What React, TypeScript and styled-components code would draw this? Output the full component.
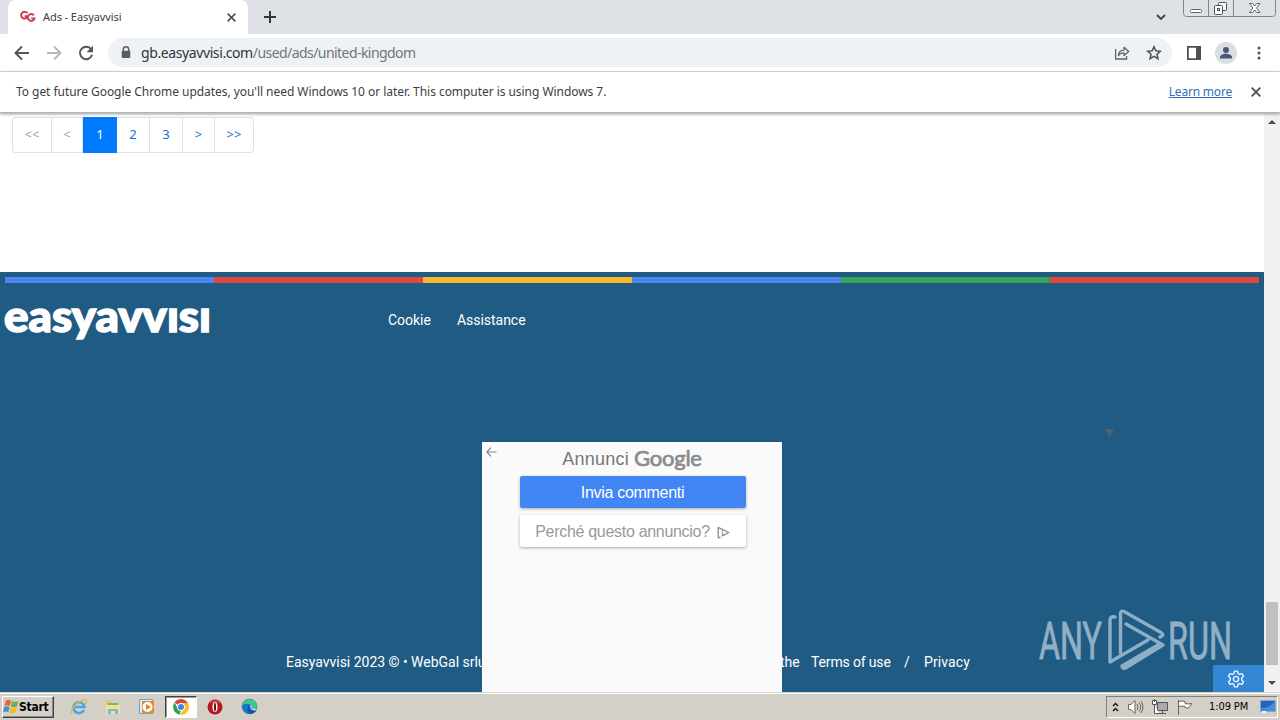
import React from 'react'
import styled, { createGlobalStyle, css } from 'styled-components'

const stripeColors = ['#4a86ee', '#e0483e', '#f8b92c', '#4a86ee', '#36a457', '#e0483e']

const pages = [
  { label: '<<', width: 39, disabled: true },
  { label: '<', width: 31, disabled: true },
  { label: '1', width: 34, active: true },
  { label: '2', width: 33 },
  { label: '3', width: 33 },
  { label: '>', width: 32 },
  { label: '>>', width: 39 },
]

const App: React.FC = () => (
  <Screen>
    <GlobalStyle />
    <TabStrip>
      <Tab>
        <Favicon />
        <TabTitle>Ads - Easyavvisi</TabTitle>
        <CloseIcon size={9} />
      </Tab>
      <NewTab>
        <svg width="12" height="12" viewBox="0 0 12 12" stroke="#33363b" strokeWidth="2">
          <path d="M6 0v12M0 6h12" />
        </svg>
      </NewTab>
      <WindowTools>
        <TabSearch width="10" height="7" viewBox="0 0 10 7">
          <path d="M1 1l4 4 4-4" fill="none" stroke="#3c4043" strokeWidth="1.8" />
        </TabSearch>
        <WindowButtons />
      </WindowTools>
    </TabStrip>

    <Toolbar>
      <NavButtons>
        <Arrow color="#53565b" />
        <Arrow color="#b5b7ba" flipped />
        <Reload />
      </NavButtons>
      <AddressBar>
        <Lock />
        <Url>
          <b>gb.easyavvisi.com</b>/used/ads/united-kingdom
        </Url>
        <Share />
        <Star />
      </AddressBar>
      <ToolbarActions />
    </Toolbar>

    <InfoBar>
      <InfoText>
        To get future Google Chrome updates, you'll need Windows 10 or later. This computer is using Windows 7.
      </InfoText>
      <LearnMore>Learn more</LearnMore>
      <CloseIcon size={10} />
    </InfoBar>

    <Viewport>
      <Page>
        <Pagination>
          {pages.map((page) => (
            <PageItem key={page.label} $width={page.width} $active={page.active} $disabled={page.disabled}>
              {page.label}
            </PageItem>
          ))}
        </Pagination>
        <Footer>
          <Stripes>
            {stripeColors.map((color, i) => (
              <Stripe key={i} $color={color} />
            ))}
          </Stripes>
          <FooterTop>
            <SiteLogo />
            <FooterLink>Cookie</FooterLink>
            <FooterLink>Assistance</FooterLink>
          </FooterTop>
          <Legal>
            <Owner>Easyavvisi 2023 © • WebGal srlu</Owner>
            <The>the</The>
            <Terms>Terms of use</Terms>
            <Slash>/</Slash>
            <Privacy>Privacy</Privacy>
          </Legal>
        </Footer>
        <AdPanel />
        <Collapse>▼</Collapse>
        <Watermark />
        <SettingsTab>
          <Gear />
        </SettingsTab>
      </Page>
      <Scrollbar>
        <ScrollArrow $up />
        <ScrollThumb />
        <ScrollArrow />
      </Scrollbar>
    </Viewport>

    <Taskbar>
      <StartButton>
        <WindowsFlag />
        Start
      </StartButton>
      <QuickLaunch />
      <Tray />
    </Taskbar>
  </Screen>
)

const Favicon = () => (
  <svg width="16" height="12" viewBox="0 0 16 12" fill="none" stroke="#c93b50" strokeWidth="1.900">
    <path d="M7.400 2.300A3.400 3.400 0 1 0 7.800 5.200H4.600" />
    <path d="M13.900 4.300A3.400 3.400 0 1 0 14.500 7.400h-3.200" />
  </svg>
)

const CloseIcon = ({ size }: { size: number }) => (
  <svg width={size} height={size} viewBox="0 0 10 10" stroke="#4b4e52" strokeWidth="1.8">
    <path d="M.7.7l8.6 8.6M9.3.7L.7 9.3" />
  </svg>
)

const Arrow = ({ color, flipped }: { color: string; flipped?: boolean }) => (
  <svg width="16" height="16" viewBox="0 0 16 16" fill="none" stroke={color} strokeWidth="1.9">
    <path d={flipped ? 'M1 8h13M8 1.5L14.5 8 8 14.5' : 'M15 8H2M8 1.5L1.500 8 8 14.500'} />
  </svg>
)

const Reload = () => (
  <svg width="16" height="16" viewBox="0 0 16 16">
    <path d="M13.2 4.300A6.200 6.200 0 1 0 14.100 9.800" fill="none" stroke="#53565b" strokeWidth="2" />
    <path d="M15 .8v6.400H8.600z" fill="#53565b" />
  </svg>
)

const Lock = () => (
  <svg width="10" height="13" viewBox="0 0 10 13">
    <path d="M2.300 5V3.500a2.700 2.700 0 0 1 5.400 0V5" fill="none" stroke="#595c61" strokeWidth="1.500" />
    <rect x=".7" y="4.700" width="8.600" height="7.300" rx="1" fill="#595c61" />
  </svg>
)

const Share = () => (
  <ShareSvg width="16" height="16" viewBox="0 0 16 16" fill="none" stroke="#5f6368" strokeWidth="1.300">
    <path d="M1.600 4v10h11v-3" />
    <path d="M4.300 10.600c.4-3.500 2.500-5.400 5.700-5.500V2.300l4.700 4.200L10 10.600V7.900c-2.500 0-4.200.7-5.700 2.700z" strokeLinejoin="round" />
  </ShareSvg>
)

const Star = () => (
  <svg width="16" height="16" viewBox="0 0 16 16">
    <path
      d="M8 1.700l1.850 4.100 4.450.45-3.350 3 1 4.450L8 11.400l-3.950 2.300 1-4.450-3.350-3 4.450-.45z"
      fill="none"
      stroke="#4d5156"
      strokeWidth="1.500"
    />
  </svg>
)

const ToolbarActions = () => (
  <Actions>
    <svg width="14" height="14" viewBox="0 0 14 14">
      <path d="M.9.9h12.200v12.200H.9z" fill="none" stroke="#4d5055" strokeWidth="1.800" />
      <path d="M9 1h4.500v12H9z" fill="#4d5055" />
    </svg>
    <svg width="22" height="22" viewBox="0 0 22 22">
      <circle cx="11" cy="11" r="11" fill="#dadde2" />
      <circle cx="11" cy="8" r="3" fill="#4a5875" />
      <path d="M5 16.500v-1.400c0-2 3-3.300 6-3.300s6 1.300 6 3.300v1.400z" fill="#4a5875" />
    </svg>
    <svg width="4" height="14" viewBox="0 0 4 14" fill="#505358">
      <circle cx="2" cy="2" r="1.500" />
      <circle cx="2" cy="7" r="1.500" />
      <circle cx="2" cy="12" r="1.500" />
    </svg>
  </Actions>
)

const WindowButtons = () => (
  <svg width="94" height="17" viewBox="0 0 94 17" fill="none" stroke="#7f848b">
    <path d="M.5 0v13.500a3 3 0 0 0 3 3h86a3 3 0 0 0 3-3V0M25.500 0v16M50.500 0v16" />
    <rect x="7.500" y="9.500" width="11" height="3" rx="1" fill="#fff" stroke="#60646b" />
    <rect x="35.500" y="2.500" width="8" height="8" rx="1" fill="#f4f5f7" stroke="#4f535a" />
    <rect x="31.500" y="5.500" width="8" height="9" rx="1" fill="#fff" stroke="#4f535a" />
    <rect x="34.500" y="8.500" width="2" height="2" stroke="#4f535a" />
    <path
      d="M66.500 3.500h3.200l2 2.500 2-2.500h3.200l-3.400 4.500 3.400 4.500h-3.200l-2-2.500-2 2.500h-3.200l3.400-4.500z"
      fill="#fff"
      stroke="#60646b"
    />
  </svg>
)

const SiteLogo = () => (
  <LogoSvg width="212" height="54" viewBox="0 0 212 54">
    <text
      x="1"
      y="38.500"
      textLength="207"
      lengthAdjust="spacingAndGlyphs"
      fontFamily="Lato, sans-serif"
      fontWeight="900"
      fontSize="43"
      fill="#fff"
      stroke="#fff"
      strokeWidth="1.500"
    >
      easyavvısı
    </text>
  </LogoSvg>
)

const AdPanel = () => (
  <Ad>
    <BackArrow width="11" height="10" viewBox="0 0 11 10" fill="none" stroke="#858585" strokeWidth="1.200">
      <path d="M10.500 5H1M5 .7L.8 5 5 9.300" />
    </BackArrow>
    <AdTitle>
      <span>Annunci</span>
      <GoogleWord>Google</GoogleWord>
    </AdTitle>
    <AdButton $primary>Invia commenti</AdButton>
    <AdButton>
      Perché questo annuncio?
      <svg width="13" height="13" viewBox="0 0 13 13" fill="none" stroke="#8a8a8a" strokeWidth="1.300">
        <path d="M3.600 11.500H1.200V1.300L11.800 6.500 5.500 9.800V6.500M5.500 4.500v1" strokeLinejoin="round" />
      </svg>
    </AdButton>
  </Ad>
)

const Watermark = () => (
  <WatermarkSvg width="210" height="72" viewBox="0 0 210 72">
    <g fill="#c7d9e7" stroke="#c7d9e7" strokeWidth=".8" fontFamily="Roboto, sans-serif" fontSize="51">
      <text x="7" y="54" textLength="63" lengthAdjust="spacingAndGlyphs">
        ANY
      </text>
      <text x="136" y="54" textLength="64" lengthAdjust="spacingAndGlyphs">
        RUN
      </text>
    </g>
    <g fill="none" stroke="#bfd7e8" strokeWidth="3.400" strokeLinejoin="round" strokeLinecap="round">
      <path d="M88.500 48V9q0-4 3.500-2.500l37 21q4 3-1 4.500" />
      <path d="M94 19l37 21-37.500 23q-3.500 1-3.500-2l36-21" />
      <path d="M83 12q-5-1-5 3v42l38-22" />
    </g>
  </WatermarkSvg>
)

const Gear = () => (
  <svg width="18" height="18" viewBox="0 0 24 24" fill="none" stroke="#e4f3ff" strokeWidth="1.900" strokeLinejoin="round">
    <circle cx="12" cy="12" r="3.500" />
    <path d="M10 1.500h4l.8 3.200 2 1.200 3.200-1 2 3.500-2.400 2.300v2.600l2.400 2.300-2 3.500-3.200-1-2 1.200-.8 3.200h-4l-.8-3.200-2-1.200-3.200 1-2-3.500 2.400-2.300v-2.600L2 8.400l2-3.500 3.200 1 2-1.200z" />
  </svg>
)

const WindowsFlag = () => (
  <svg width="16" height="16" viewBox="1 0 16 16">
    <path d="M4 1.500q2.500-1.600 5 0L7.800 7q-2.400-1.500-5.200 0z" fill="#e8652d" />
    <path d="M10 2q2.800 1.500 6.500 0L15 7.600q-2.800 1.200-6.200-.1z" fill="#71b644" />
    <path d="M2.300 8q2.500-1.600 5.200 0l-1.300 5.300q-2.300-1.600-5.200 0z" fill="#3e91d5" />
    <path d="M8.500 8.500q2.700 1.500 6.200 0l-1.400 5.300q-2.700 1.500-6.100-.1z" fill="#f4ba28" />
  </svg>
)

const QuickLaunch = () => (
  <Launchers>
    <Launcher>
      <svg width="18" height="18" viewBox="0 0 18 18" fill="none">
        <path d="M14 12A5.500 5.500 0 1 1 14.500 9H5" stroke="#45a9e5" strokeWidth="2.600" />
        <path d="M2.500 16C-1 14 5 4 14 2c3-.4 3 1.500 1.500 4" stroke="#e4b735" strokeWidth="1.300" />
      </svg>
    </Launcher>
    <Launcher>
      <svg width="18" height="18" viewBox="0 0 18 18">
        <path d="M2 3h5l1 2h7v11H2z" fill="#e9c85c" />
        <path d="M4 5h10v5H4z" fill="#70bc73" />
        <path d="M2 7h14v9H2z" fill="#f6df91" />
        <path d="M4 16v-5h10v5h-3v-3H7v3z" fill="#7db9dd" />
      </svg>
    </Launcher>
    <Launcher>
      <svg width="18" height="18" viewBox="0 0 18 18">
        <path d="M1.500 1.500h13v14h-13z" fill="#d9ecf8" stroke="#6ba7ce" />
        <path d="M4 3h12v12H4z" fill="#ef8a23" />
        <circle cx="9.500" cy="9" r="5" fill="#fff" />
        <path d="M8 6l5 3-5 3z" fill="#e97b16" />
      </svg>
    </Launcher>
    <Launcher $pressed>
      <svg width="16" height="16" viewBox="0 0 16 16">
        <path d="M8 8L1.500 3.500A8 8 0 0 1 15.200 4.500H8z" fill="#df4335" />
        <path d="M1.500 3.500L5 10l3 1.500-1.500 4.300A8 8 0 0 1 1.500 3.500" fill="#2e9f51" />
        <path d="M8 4.500h7.200A8 8 0 0 1 6.800 15.900L11 10z" fill="#fac21c" />
        <circle cx="8" cy="8" r="3.900" fill="#fff" />
        <circle cx="8" cy="8" r="3" fill="#4285e8" />
      </svg>
    </Launcher>
    <Launcher>
      <svg width="16" height="16" viewBox="0 0 16 16">
        <circle cx="8" cy="8" r="7.500" fill="#b81622" />
        <path d="M3 4q5-4 10 0" stroke="#e65c61" fill="none" />
        <ellipse cx="8" cy="8" rx="2.500" ry="5" fill="#fff" />
        <ellipse cx="8" cy="8" rx="1" ry="4.500" fill="#6a1016" />
      </svg>
    </Launcher>
    <Launcher>
      <svg width="17" height="17" viewBox="0 0 17 17">
        <circle cx="8.500" cy="8.500" r="7.800" fill="#1777c9" />
        <path d="M.8 8C1 .5 14-2 16.300 7q.3 4-6 3.700 1-3-1.800-4.500Q4 4.500.8 8" fill="#42c391" />
        <path d="M9 6q-3 5 3 6.500 2 .5 4-1-2 4-6 4.300Q3 13 9 6" fill="#0f55a5" />
        <path d="M9.500 7q2 1 1 3.300l5.500.4-1.500 1.800q-6 0-5-5.500" fill="#d9d7d0" />
      </svg>
    </Launcher>
  </Launchers>
)

const Tray = () => (
  <TrayBox>
    <svg width="7" height="10" viewBox="0 0 7 10" fill="none" stroke="#111" strokeWidth="1.400">
      <path d="M1 4l2.500-2.500L6 4M1 9l2.500-2.500L6 9" />
    </svg>
    <svg width="17" height="16" viewBox="0 0 17 16" fill="#fff" stroke="#686868">
      <path d="M1.500 5.500H4l4-4v13l-4-4H1.500z" />
      <path d="M10 5q2 3 0 6M12 3.500q3.500 4.500 0 9M14 2q4 6 0 12" fill="none" />
    </svg>
    <svg width="17" height="16" viewBox="0 0 17 16" fill="#fff" stroke="#555">
      <path d="M5.500 3.500h10v8h-10z" fill="#aaa" />
      <path d="M7 14.500h7M10.500 12v3" />
      <path d="M.5 1.500h4v4h-4zM2.500 0v3M2.500 6v8.500H7" />
    </svg>
    <svg width="17" height="16" viewBox="0 0 17 16" fill="#fff" stroke="#666">
      <path d="M1.500 1v15M2 2.500q3-1 6 0v2q3 1 7 0l-3 4q-2 1-4 0v-1q-3-1-6 0" />
    </svg>
    <Clock>1:09 PM</Clock>
    <svg width="16" height="14" viewBox="0 0 16 14">
      <path d="M.5.5h15v11H.5z" fill="#2462bb" stroke="#86a9cb" />
      <path d="M1 8Q10 8 15 1v10H1z" fill="#438ddd" />
      <path d="M2 12h4" stroke="#edf7ff" strokeWidth="2" />
    </svg>
  </TrayBox>
)

const GlobalStyle = createGlobalStyle`
  * {
    box-sizing: border-box;
  }

  body {
    margin: 0;
    overflow: hidden;
  }

  svg {
    display: block;
    flex: none;
  }
`

const uiFont = css`
  font-family: 'DejaVu Sans Condensed', 'DejaVu Sans', sans-serif;
  font-stretch: condensed;
`

const Screen = styled.div`
  width: 1280px;
  height: 720px;
  display: flex;
  flex-direction: column;
  overflow: hidden;
  background: #fff;
  white-space: nowrap;
`

const TabStrip = styled.header`
  height: 34px;
  display: flex;
  padding-left: 8px;
  background: #dee1e6;
`

const Tab = styled.div`
  width: 240px;
  display: flex;
  align-items: center;
  padding: 0 12px;
  border-radius: 8px 8px 0 0;
  background: #fff;
`

const TabTitle = styled.span`
  flex: 1;
  margin: -2px 0 0 7px;
  font: 11px 'Noto Sans', sans-serif;
  letter-spacing: -0.08px;
  color: #3c4043;
`

const NewTab = styled.div`
  display: flex;
  align-items: center;
  padding-left: 16px;
`

const WindowTools = styled.div`
  display: flex;
  margin-left: auto;
  padding-right: 3px;
  gap: 17px;
`

const TabSearch = styled.svg`
  margin-top: 14px;
`

const Toolbar = styled.div`
  height: 38px;
  display: flex;
  align-items: center;
  padding: 0 19px 0 14px;
  border-bottom: 1px solid #d5d7da;
`

const NavButtons = styled.div`
  display: flex;
  gap: 16px;
`

const AddressBar = styled.div`
  flex: 1;
  height: 29px;
  display: flex;
  align-items: center;
  margin-left: 14px;
  padding: 0 10px 0 13px;
  border-radius: 15px;
  background: #eff2f5;
`

const Url = styled.span`
  flex: 1;
  margin-left: 10px;
  font: 14px 'Noto Sans', sans-serif;
  letter-spacing: -0.56px;
  color: #70757b;

  b {
    font-weight: 400;
    letter-spacing: -0.4px;
    color: #303439;
  }
`

const ShareSvg = styled.svg`
  margin-right: 16px;
`

const Actions = styled.div`
  display: flex;
  align-items: center;
  gap: 14px;
  margin-left: 15px;

  svg:last-child {
    margin-left: 6px;
  }
`

const InfoBar = styled.div`
  position: relative;
  z-index: 1;
  height: 41px;
  display: flex;
  align-items: center;
  padding: 0 19px 0 16px;
  background: #fff;
  border-bottom: 1px solid #b5b5b5;
  box-shadow: 0 1px 3px #999;
`

const InfoText = styled.span`
  flex: 1;
  margin-top: -2px;
  font: 12px 'Noto Sans', sans-serif;
  letter-spacing: -0.05px;
  color: #3c4043;
`

const LearnMore = styled.a`
  margin: -2px 19px 0 0;
  font: 12px 'Noto Sans', sans-serif;
  letter-spacing: -0.2px;
  color: #3270bd;
  text-decoration: underline;
`

const Viewport = styled.div`
  flex: 1;
  min-height: 0;
  display: flex;
`

const Page = styled.main`
  position: relative;
  flex: 1;
  display: flex;
  flex-direction: column;
  padding-top: 4px;
`

const Pagination = styled.nav`
  width: 242px;
  height: 36px;
  display: flex;
  margin-left: 12px;
  border: solid #dee2e6;
  border-width: 1px 0 1px 1px;
  border-radius: 4px;
`

const PageItem = styled.a<{ $width: number; $active?: boolean; $disabled?: boolean }>`
  width: ${(props) => props.$width}px;
  flex: none;
  display: flex;
  align-items: center;
  justify-content: center;
  padding-bottom: 2px;
  border-right: 1px solid #dee2e6;
  font: 13px 'Noto Sans', sans-serif;
  color: ${(props) => (props.$disabled ? '#9b9fa3' : '#1970cf')};

  &:last-child {
    border-radius: 0 4px 4px 0;
  }

  ${(props) =>
    props.$active &&
    css`
      margin: -1px 0;
      border: 0;
      background: #007bff;
      color: #fff;
    `}
`

const Footer = styled.footer`
  flex: 1;
  display: flex;
  flex-direction: column;
  margin-top: 119px;
  padding: 5px 5px 0;
  background: #205b83;
  font: 14px Roboto, sans-serif;
  color: #fff;
`

const Stripes = styled.div`
  height: 6px;
  display: flex;
`

const Stripe = styled.span<{ $color: string }>`
  flex: 1;
  background: ${(props) => props.$color};
`

const FooterTop = styled.div`
  display: flex;
  align-items: center;
  padding-top: 10px;
  gap: 26px;
`

const LogoSvg = styled.svg`
  margin-left: -2px;
  margin-right: 147px;
`

const FooterLink = styled.a`
  letter-spacing: -0.02px;
`

const Legal = styled.div`
  display: flex;
  margin-top: auto;
  padding: 0 0 22px 281px;
`

const Owner = styled.span`
  width: 494px;
  letter-spacing: -0.02px;
`

const The = styled.span`
  width: 31px;
`

const Terms = styled.span`
  width: 93px;
  letter-spacing: -0.15px;
`

const Slash = styled.span`
  width: 20px;
`

const Privacy = styled.span`
  letter-spacing: 0.1px;
`

const Ad = styled.aside`
  position: absolute;
  left: 482px;
  bottom: 0;
  width: 300px;
  height: 250px;
  display: flex;
  flex-direction: column;
  align-items: center;
  background: #fafafa;
`

const BackArrow = styled.svg`
  position: absolute;
  top: 5px;
  left: 4px;
`

const AdTitle = styled.div`
  height: 34px;
  display: flex;
  align-items: center;
  gap: 5px;
  font: 18px 'Liberation Sans', sans-serif;
  letter-spacing: 0.25px;
  color: #777;
`

const GoogleWord = styled.b`
  margin-top: -4px;
  font: 400 22px Lato, sans-serif;
  letter-spacing: -0.25px;
  color: #8b8b8b;
  -webkit-text-stroke: 0.7px #8b8b8b;
`

const AdButton = styled.button<{ $primary?: boolean }>`
  width: 226px;
  height: 32px;
  display: flex;
  align-items: center;
  justify-content: center;
  gap: 7px;
  margin: 0 0 7px 1px;
  padding: 2px 0 0;
  border: 0;
  border-radius: 2px;
  background: ${(props) => (props.$primary ? '#4285f4' : '#fff')};
  box-shadow: 0 1px 3px #aaa;
  font: 16px 'Liberation Sans', sans-serif;
  letter-spacing: -0.3px;
  color: ${(props) => (props.$primary ? '#fff' : '#999')};
`

const Collapse = styled.span`
  position: absolute;
  top: 313px;
  left: 1105px;
  font: 11px 'DejaVu Sans', sans-serif;
  color: #50616d;
`

const WatermarkSvg = styled.svg`
  position: absolute;
  right: 22px;
  bottom: 15px;
  opacity: 0.68;
`

const SettingsTab = styled.div`
  position: absolute;
  right: 0;
  bottom: 0;
  width: 51px;
  height: 27px;
  display: flex;
  align-items: center;
  padding-left: 14px;
  border-top-left-radius: 2px;
  background: #3487d5;
`

const Scrollbar = styled.div`
  width: 16px;
  display: flex;
  flex-direction: column;
  align-items: center;
  padding: 7px 0;
  background: #f1f1f1;
`

const ScrollArrow = styled.i<{ $up?: boolean }>`
  border: 4px solid transparent;
  border-top-width: ${(props) => (props.$up ? 0 : 4)}px;
  border-bottom-width: ${(props) => (props.$up ? 4 : 0)}px;
  border-${(props) => (props.$up ? 'bottom' : 'top')}-color: #4b4b4b;
`

const ScrollThumb = styled.div`
  width: 12px;
  height: 63px;
  margin: auto 0 16px;
  background: #c1c1c1;
`

const Taskbar = styled.footer`
  height: 28px;
  display: flex;
  align-items: center;
  padding: 0 2px;
  border-top: 1px solid #d4d0c8;
  box-shadow: inset 0 1px #fff;
  background: #d4d0c8;
`

const StartButton = styled.button`
  width: 52px;
  height: 22px;
  display: flex;
  align-items: center;
  padding: 0;
  border: 1px solid;
  border-color: #fff #404040 #404040 #fff;
  box-shadow: inset -1px -1px #888;
  background: #d4d0c8;
  ${uiFont}
  font-size: 12px;
  font-weight: 700;
  letter-spacing: -0.25px;
  color: #000;
`

const Launchers = styled.div`
  display: flex;
  margin-left: 9px;
  gap: 2px;
`

const Launcher = styled.div<{ $pressed?: boolean }>`
  width: 32px;
  height: 22px;
  display: flex;
  align-items: center;
  justify-content: center;
  border: 1px solid transparent;

  ${(props) =>
    props.$pressed &&
    css`
      background: #fff;
      border-color: #404040 #fff #fff #404040;
      box-shadow: inset 1px 1px #999;
    `}
`

const TrayBox = styled.div`
  width: 172px;
  height: 22px;
  display: flex;
  align-items: center;
  gap: 8px;
  margin-left: auto;
  padding: 0 1px 0 5px;
  border: 1px solid;
  border-color: #808080 #fff #fff #808080;
`

const Clock = styled.span`
  width: 43px;
  margin-left: auto;
  ${uiFont}
  font-size: 11px;
  letter-spacing: -0.1px;
  color: #000;
`

export default App
